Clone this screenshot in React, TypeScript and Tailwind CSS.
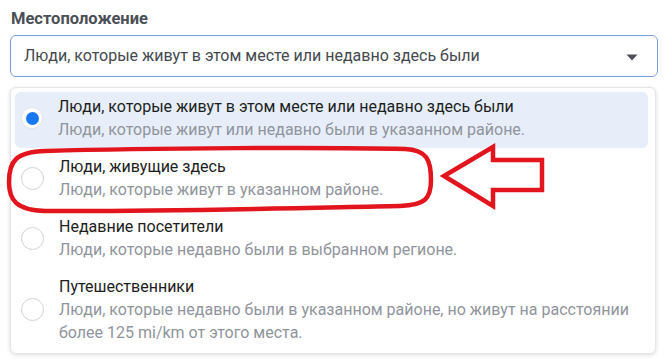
import React from 'react'

type Option = {
  title: string
  desc: React.ReactNode
  selected?: boolean
}

const options: Option[] = [
  {
    title: 'Люди, которые живут в этом месте или недавно здесь были',
    desc: 'Люди, которые живут или недавно были в указанном районе.',
    selected: true,
  },
  {
    title: 'Люди, живущие здесь',
    desc: 'Люди, которые живут в указанном районе.',
  },
  {
    title: 'Недавние посетители',
    desc: 'Люди, которые недавно были в выбранном регионе.',
  },
  {
    title: 'Путешественники',
    desc: (
      <>
        Люди, которые недавно были в указанном районе, но живут на расстоянии
        <br />
        более 125 mi/km от этого места.
      </>
    ),
  },
]

function Radio({ checked }: { checked?: boolean }) {
  if (checked) {
    return (
      <div className="w-[22px] h-[22px] shrink-0 rounded-full bg-white border border-[#dfe3ea] flex items-center justify-center">
        <div className="w-[13px] h-[13px] rounded-full bg-[#1877f2]" />
      </div>
    )
  }
  return <div className="w-[23px] h-[23px] shrink-0 rounded-full bg-white border border-[#cfd3d8]" />
}

export default function App() {
  return (
    <div className="relative w-[672px] h-[364px] bg-white overflow-hidden pl-[10px] pr-[14px] pt-[8px] font-['Roboto','Liberation_Sans',sans-serif]">
      <div className="ml-[1px] text-[16.5px] leading-[22px] font-bold text-[#4b4f56]">Местоположение</div>

      {/* select */}
      <div className="mt-[5px] h-[42px] rounded-[6px] border border-[#7c9fdb] bg-white pl-[13px] pr-[19px] flex items-center justify-between">
        <span className="text-[16px] text-[#444950]">Люди, которые живут в этом месте или недавно здесь были</span>
        <svg width="12" height="7" viewBox="0 0 12 7" className="mt-[2px]">
          <path d="M0.5 0.5h11L6 6.5z" fill="#4b4f56" />
        </svg>
      </div>

      {/* dropdown */}
      <div className="mt-[10px] w-[646px] h-[267px] rounded-[6px] border border-[#e4e6ea] bg-white shadow-[0_1px_4px_rgba(0,0,0,0.14)] pl-[4px] pr-[7px] pt-[4px] flex flex-col gap-[4px]">
        {options.map((o) => (
          <div
            key={o.title}
            className={`flex items-center gap-[15px] pl-[6px] pt-[3px] pb-[7px] rounded-[6px] ${o.selected ? 'bg-[#e7eefa]' : ''}`}
          >
            <Radio checked={o.selected} />
            <div className="text-[16px] leading-[23px]">
              <div className="text-[#1c1e21]">{o.title}</div>
              <div className="text-[#90949c]">{o.desc}</div>
            </div>
          </div>
        ))}
      </div>

      {/* hand-drawn annotation */}
      <svg className="absolute inset-0 pointer-events-none" width="672" height="364" viewBox="0 0 672 364">
        <path
          d="M45 151 C150 148 330 147 405 149 C427 150 431 160 431 180 C431 199 425 205 400 206 C300 208 150 212 45 211 C16 210 9 200 9 182 C9 161 16 152 45 151 Z"
          fill="none"
          stroke="#e2141e"
          strokeWidth="4.5"
        />
        <path
          d="M444 176 L493 147 L493 160 L542 160 L542 190 L493 190 L493 206 Z"
          fill="none"
          stroke="#e2141e"
          strokeWidth="4.5"
          strokeLinejoin="miter"
        />
      </svg>
    </div>
  )
}
